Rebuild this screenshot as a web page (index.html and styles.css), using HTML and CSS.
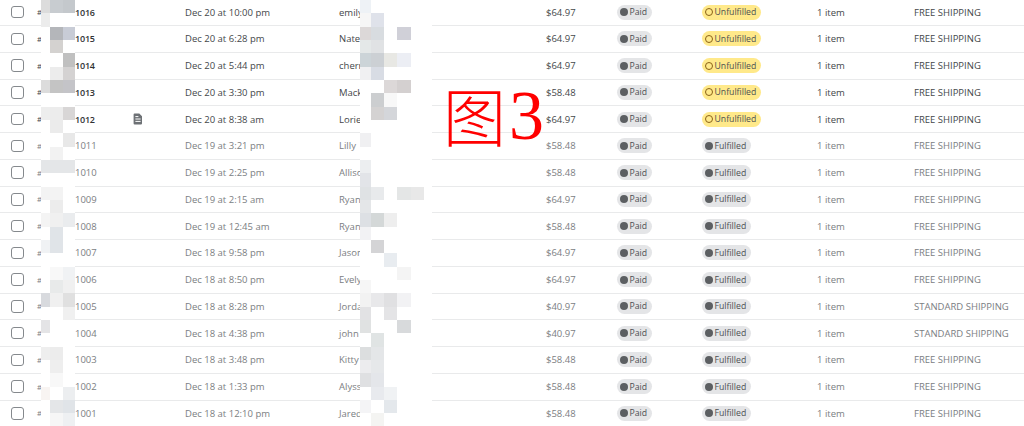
FILE: index.html
```html
<!DOCTYPE html>
<html lang="en">
<head>
<meta charset="utf-8">
<title>Orders</title>
<link rel="stylesheet" href="styles.css">
</head>
<body>
<main class="orders">
  <div class="row open"><span class="check"></span><span class="order"><i>#</i><b>1016</b></span><span></span><span>Dec 20 at 10:00 pm</span><span>emily</span><span>$64.97</span><span><em class="pill"><u class="dot"></u>Paid</em></span><span><em class="pill warn"><u class="ring"></u>Unfulfilled</em></span><span>1 item</span><span>FREE SHIPPING</span></div>
  <div class="row open"><span class="check"></span><span class="order"><i>#</i><b>1015</b></span><span></span><span>Dec 20 at 6:28 pm</span><span>Nate</span><span>$64.97</span><span><em class="pill"><u class="dot"></u>Paid</em></span><span><em class="pill warn"><u class="ring"></u>Unfulfilled</em></span><span>1 item</span><span>FREE SHIPPING</span></div>
  <div class="row open"><span class="check"></span><span class="order"><i>#</i><b>1014</b></span><span></span><span>Dec 20 at 5:44 pm</span><span>cherr</span><span>$64.97</span><span><em class="pill"><u class="dot"></u>Paid</em></span><span><em class="pill warn"><u class="ring"></u>Unfulfilled</em></span><span>1 item</span><span>FREE SHIPPING</span></div>
  <div class="row open"><span class="check"></span><span class="order"><i>#</i><b>1013</b></span><span></span><span>Dec 20 at 3:30 pm</span><span>Mack</span><span>$58.48</span><span><em class="pill"><u class="dot"></u>Paid</em></span><span><em class="pill warn"><u class="ring"></u>Unfulfilled</em></span><span>1 item</span><span>FREE SHIPPING</span></div>
  <div class="row open"><span class="check"></span><span class="order"><i>#</i><b>1012</b></span><span><svg class="note" viewBox="0 0 10 12"><path d="M1.6.5h4.7L9 3.2v7.2a1 1 0 0 1-1 1H1.6a1 1 0 0 1-1-1V1.5a1 1 0 0 1 1-1z" fill="#6d7175"/><path d="M2.4 3.6h3M2.4 6h5.2M2.4 8.4h5.2" stroke="#fff" stroke-width="1"/></svg></span><span>Dec 20 at 8:38 am</span><span>Lorie</span><span>$64.97</span><span><em class="pill"><u class="dot"></u>Paid</em></span><span><em class="pill warn"><u class="ring"></u>Unfulfilled</em></span><span>1 item</span><span>FREE SHIPPING</span></div>
  <div class="row"><span class="check"></span><span class="order"><i>#</i><b>1011</b></span><span></span><span>Dec 19 at 3:21 pm</span><span>Lilly</span><span>$58.48</span><span><em class="pill"><u class="dot"></u>Paid</em></span><span><em class="pill"><u class="dot"></u>Fulfilled</em></span><span>1 item</span><span>FREE SHIPPING</span></div>
  <div class="row"><span class="check"></span><span class="order"><i>#</i><b>1010</b></span><span></span><span>Dec 19 at 2:25 pm</span><span>Allison</span><span>$58.48</span><span><em class="pill"><u class="dot"></u>Paid</em></span><span><em class="pill"><u class="dot"></u>Fulfilled</em></span><span>1 item</span><span>FREE SHIPPING</span></div>
  <div class="row"><span class="check"></span><span class="order"><i>#</i><b>1009</b></span><span></span><span>Dec 19 at 2:15 am</span><span>Ryan</span><span>$64.97</span><span><em class="pill"><u class="dot"></u>Paid</em></span><span><em class="pill"><u class="dot"></u>Fulfilled</em></span><span>1 item</span><span>FREE SHIPPING</span></div>
  <div class="row"><span class="check"></span><span class="order"><i>#</i><b>1008</b></span><span></span><span>Dec 19 at 12:45 am</span><span>Ryan</span><span>$58.48</span><span><em class="pill"><u class="dot"></u>Paid</em></span><span><em class="pill"><u class="dot"></u>Fulfilled</em></span><span>1 item</span><span>FREE SHIPPING</span></div>
  <div class="row"><span class="check"></span><span class="order"><i>#</i><b>1007</b></span><span></span><span>Dec 18 at 9:58 pm</span><span>Jason</span><span>$64.97</span><span><em class="pill"><u class="dot"></u>Paid</em></span><span><em class="pill"><u class="dot"></u>Fulfilled</em></span><span>1 item</span><span>FREE SHIPPING</span></div>
  <div class="row"><span class="check"></span><span class="order"><i>#</i><b>1006</b></span><span></span><span>Dec 18 at 8:50 pm</span><span>Evelyn</span><span>$64.97</span><span><em class="pill"><u class="dot"></u>Paid</em></span><span><em class="pill"><u class="dot"></u>Fulfilled</em></span><span>1 item</span><span>FREE SHIPPING</span></div>
  <div class="row"><span class="check"></span><span class="order"><i>#</i><b>1005</b></span><span></span><span>Dec 18 at 8:28 pm</span><span>Jordan</span><span>$40.97</span><span><em class="pill"><u class="dot"></u>Paid</em></span><span><em class="pill"><u class="dot"></u>Fulfilled</em></span><span>1 item</span><span>STANDARD SHIPPING</span></div>
  <div class="row"><span class="check"></span><span class="order"><i>#</i><b>1004</b></span><span></span><span>Dec 18 at 4:38 pm</span><span>john</span><span>$40.97</span><span><em class="pill"><u class="dot"></u>Paid</em></span><span><em class="pill"><u class="dot"></u>Fulfilled</em></span><span>1 item</span><span>STANDARD SHIPPING</span></div>
  <div class="row"><span class="check"></span><span class="order"><i>#</i><b>1003</b></span><span></span><span>Dec 18 at 3:48 pm</span><span>Kitty</span><span>$58.48</span><span><em class="pill"><u class="dot"></u>Paid</em></span><span><em class="pill"><u class="dot"></u>Fulfilled</em></span><span>1 item</span><span>FREE SHIPPING</span></div>
  <div class="row"><span class="check"></span><span class="order"><i>#</i><b>1002</b></span><span></span><span>Dec 18 at 1:33 pm</span><span>Alyssa</span><span>$58.48</span><span><em class="pill"><u class="dot"></u>Paid</em></span><span><em class="pill"><u class="dot"></u>Fulfilled</em></span><span>1 item</span><span>FREE SHIPPING</span></div>
  <div class="row"><span class="check"></span><span class="order"><i>#</i><b>1001</b></span><span></span><span>Dec 18 at 12:10 pm</span><span>Jared</span><span>$58.48</span><span><em class="pill"><u class="dot"></u>Paid</em></span><span><em class="pill"><u class="dot"></u>Fulfilled</em></span><span>1 item</span><span>FREE SHIPPING</span></div>
</main>

<svg class="mosaic mosaic-a" viewBox="0 0 34.3 426" shape-rendering="crispEdges" aria-hidden="true">
  <rect width="34.3" height="426" fill="#fff"/>
  <rect x="0" y="0" width="8.7" height="13.33" fill="#dcdcdc"/><rect x="8.7" y="0" width="13.3" height="13.33" fill="#c8ccd0"/><rect x="22" y="0" width="12.3" height="13.33" fill="#c4c8cc"/>
  <rect x="0" y="13.33" width="8.7" height="13.33" fill="#ececec"/>
  <rect x="8.7" y="26.67" width="13.3" height="13.33" fill="#b4b6ba"/><rect x="22" y="26.67" width="12.3" height="13.33" fill="#c8ccd6"/>
  <rect x="8.7" y="40" width="13.3" height="13.33" fill="#d4d2d0"/>
  <rect x="22" y="53.33" width="12.3" height="13.33" fill="#c0c0c0"/>
  <rect x="8.7" y="66.67" width="13.3" height="13.33" fill="#ececec"/><rect x="22" y="66.67" width="12.3" height="13.33" fill="#d4d2d2"/>
  <rect x="0" y="80" width="8.7" height="13.33" fill="#dcdcdc"/><rect x="8.7" y="80" width="13.3" height="13.33" fill="#c4c4c4"/><rect x="22" y="80" width="12.3" height="13.33" fill="#c4c4c8"/>
  <rect x="0" y="106.67" width="8.7" height="13.33" fill="#ededed"/><rect x="8.7" y="106.67" width="13.3" height="13.33" fill="#ececec"/><rect x="22" y="106.67" width="12.3" height="13.33" fill="#d8d6d6"/>
  <rect x="8.7" y="120" width="13.3" height="13.33" fill="#ebebeb"/>
  <rect x="22" y="133.33" width="12.3" height="13.33" fill="#e8e8e8"/>
  <rect x="8.7" y="146.67" width="13.3" height="13.33" fill="#f2f2f2"/>
  <rect x="0" y="160" width="34.3" height="13.33" fill="#e4e6e8"/>
  <rect x="0" y="186.67" width="22" height="13.33" fill="#f3f3f3"/>
  <rect x="8.7" y="200" width="13.3" height="13.33" fill="#ececec"/>
  <rect x="0" y="213.33" width="8.7" height="13.33" fill="#f4f4f4"/><rect x="8.7" y="213.33" width="13.3" height="13.33" fill="#f0f0f0"/><rect x="22" y="213.33" width="12.3" height="13.33" fill="#eaecee"/>
  <rect x="8.7" y="226.67" width="13.3" height="13.33" fill="#e0e4e8"/>
  <rect x="0" y="240" width="8.7" height="13.33" fill="#f0f2f4"/><rect x="8.7" y="240" width="13.3" height="13.33" fill="#e0e4e8"/>
  <rect x="8.7" y="266.67" width="13.3" height="13.33" fill="#f8f8f8"/><rect x="22" y="266.67" width="12.3" height="13.33" fill="#f0f2f4"/>
  <rect x="8.7" y="280" width="13.3" height="13.33" fill="#e8eaea"/><rect x="22" y="280" width="12.3" height="13.33" fill="#f0f0f0"/>
  <rect x="0" y="293.33" width="8.7" height="13.33" fill="#d8dade"/><rect x="8.7" y="293.33" width="13.3" height="13.33" fill="#f0f0f0"/><rect x="22" y="293.33" width="12.3" height="13.33" fill="#e0e0e0"/>
  <rect x="22" y="306.67" width="12.3" height="13.33" fill="#f0f0f0"/>
  <rect x="0" y="320" width="8.7" height="13.33" fill="#e4e4e6"/>
  <rect x="0" y="346.67" width="8.7" height="13.33" fill="#eeeeee"/><rect x="8.7" y="346.67" width="13.3" height="13.33" fill="#ececec"/>
  <rect x="8.7" y="360" width="13.3" height="13.33" fill="#eeeeee"/>
  <rect x="8.7" y="373.33" width="13.3" height="13.33" fill="#f8f8f8"/>
  <rect x="0" y="386.67" width="8.7" height="13.33" fill="#f8f4f2"/><rect x="22" y="386.67" width="12.3" height="13.33" fill="#eceef0"/>
  <rect x="8.7" y="400" width="13.3" height="13.33" fill="#e4e6e8"/><rect x="22" y="400" width="12.3" height="13.33" fill="#e0e4e8"/>
  <rect x="8.7" y="413.33" width="13.3" height="13.33" fill="#f6f6f6"/><rect x="22" y="413.33" width="12.3" height="13.33" fill="#eef0f2"/>
</svg>

<svg class="mosaic mosaic-b" viewBox="0 0 72 426" shape-rendering="crispEdges" aria-hidden="true">
  <rect width="72" height="426" fill="#fff"/>
  <rect x="0" y="0" width="10.7" height="13.33" fill="#eef2f6"/>
  <rect x="0" y="13.33" width="10.7" height="13.33" fill="#f6f6f6"/><rect x="10.7" y="13.33" width="13.3" height="13.33" fill="#dfe2ea"/>
  <rect x="0" y="26.67" width="10.7" height="13.33" fill="#dcd8d8"/><rect x="10.7" y="26.67" width="13.3" height="13.33" fill="#d8dce0"/><rect x="37.3" y="26.67" width="13.4" height="13.33" fill="#d0d0d8"/>
  <rect x="0" y="40" width="10.7" height="13.33" fill="#e4e8e8"/><rect x="10.7" y="40" width="13.3" height="13.33" fill="#e0e2e4"/>
  <rect x="0" y="53.33" width="10.7" height="13.33" fill="#ccd4d8"/><rect x="10.7" y="53.33" width="13.3" height="13.33" fill="#ccd0d4"/><rect x="24" y="53.33" width="13.3" height="13.33" fill="#e8e8e4"/><rect x="37.3" y="53.33" width="13.4" height="13.33" fill="#eceef4"/>
  <rect x="0" y="66.67" width="10.7" height="13.33" fill="#f0f0f2"/><rect x="10.7" y="66.67" width="13.3" height="13.33" fill="#d8dce4"/>
  <rect x="24" y="80" width="13.3" height="13.33" fill="#dcd8d8"/><rect x="37.3" y="80" width="13.4" height="13.33" fill="#d4d0d0"/>
  <rect x="10.7" y="93.33" width="13.3" height="13.33" fill="#ccced0"/><rect x="24" y="93.33" width="13.3" height="13.33" fill="#f8f8f8"/>
  <rect x="10.7" y="106.67" width="13.3" height="13.33" fill="#d4d2d2"/><rect x="24" y="106.67" width="13.3" height="13.33" fill="#d4d6da"/>
  <rect x="0" y="133.33" width="10.7" height="13.33" fill="#f0f0f2"/>
  <rect x="0" y="160" width="10.7" height="13.33" fill="#eceef0"/>
  <rect x="0" y="173.33" width="10.7" height="13.33" fill="#e2e4e8"/>
  <rect x="0" y="186.67" width="10.7" height="13.33" fill="#dfe2e4"/><rect x="10.7" y="186.67" width="13.3" height="13.33" fill="#e8eaec"/><rect x="37.3" y="186.67" width="13.4" height="13.33" fill="#e4e6e6"/><rect x="50.7" y="186.67" width="13.3" height="13.33" fill="#e8e8e8"/>
  <rect x="0" y="200" width="10.7" height="13.33" fill="#e4e6e8"/>
  <rect x="0" y="213.33" width="10.7" height="13.33" fill="#dde0e4"/><rect x="10.7" y="213.33" width="13.3" height="13.33" fill="#d4d8d8"/><rect x="24" y="213.33" width="13.3" height="13.33" fill="#eeeeee"/>
  <rect x="0" y="226.67" width="10.7" height="13.33" fill="#f2f2f4"/>
  <rect x="10.7" y="240" width="13.3" height="13.33" fill="#d4d4d6"/>
  <rect x="24" y="253.33" width="13.3" height="13.33" fill="#e8ecf0"/>
  <rect x="37.3" y="266.67" width="13.4" height="13.33" fill="#f4f4f4"/>
  <rect x="0" y="280" width="10.7" height="13.33" fill="#f6f6f6"/>
  <rect x="0" y="293.33" width="10.7" height="13.33" fill="#f2f2f2"/><rect x="10.7" y="293.33" width="13.3" height="13.33" fill="#e8e8ea"/><rect x="24" y="293.33" width="13.3" height="13.33" fill="#e0e0e2"/><rect x="37.3" y="293.33" width="13.4" height="13.33" fill="#f2f2f4"/>
  <rect x="0" y="306.67" width="10.7" height="13.33" fill="#e2e2e4"/><rect x="24" y="306.67" width="13.3" height="13.33" fill="#e4e4e6"/>
  <rect x="0" y="320" width="10.7" height="13.33" fill="#e0e2e2"/><rect x="37.3" y="320" width="13.4" height="13.33" fill="#d8dadc"/>
  <rect x="10.7" y="333.33" width="13.3" height="13.33" fill="#e0e4e4"/>
  <rect x="0" y="346.67" width="10.7" height="13.33" fill="#dcdedf"/><rect x="10.7" y="346.67" width="13.3" height="13.33" fill="#e4e6e8"/>
  <rect x="0" y="360" width="10.7" height="13.33" fill="#ececee"/><rect x="10.7" y="360" width="13.3" height="13.33" fill="#e6e8ea"/>
  <rect x="0" y="373.33" width="10.7" height="13.33" fill="#dfe0e2"/><rect x="10.7" y="373.33" width="13.3" height="13.33" fill="#e4e6ea"/>
  <rect x="10.7" y="386.67" width="13.3" height="13.33" fill="#e8eaee"/><rect x="24" y="386.67" width="13.3" height="13.33" fill="#f0f2f4"/>
  <rect x="0" y="400" width="10.7" height="13.33" fill="#f4f4f6"/><rect x="24" y="400" width="13.3" height="13.33" fill="#e4e8ec"/>
  <rect x="10.7" y="413.33" width="13.3" height="13.33" fill="#f4f4f2"/>
</svg>

<div class="stamp"><span class="stamp-cjk">图</span><span class="stamp-num">3</span></div>
</body>
</html>
```

FILE: styles.css
```css
* { box-sizing: border-box; }

html, body {
  margin: 0;
  height: 426px;
  overflow: hidden;
  background: #fff;
}

body {
  position: relative;
  font-family: "Open Sans", "Noto Sans", sans-serif;
  font-size: 9.5px;
  color: #44474a;
}

.orders {
  margin-top: -0.7px;
}

.row {
  display: grid;
  grid-template-columns: 26px 96px 52px 154px 207px 71px 85px 115px 97px 1fr;
  align-items: center;
  height: 26.75px;
  padding-left: 11px;
  border-bottom: 1px solid #e9eaeb;
  color: #7b7e82;
  white-space: nowrap;
}

.row.open {
  color: #44474a;
}

.check {
  display: block;
  width: 12.5px;
  height: 12.5px;
  border: 1.3px solid #85898d;
  border-radius: 3px;
}

.order {
  display: flex;
  align-items: center;
}

.order i {
  width: 38px;
  font-size: 7.5px;
  font-style: normal;
}

.order b {
  font-weight: 400;
}

.open .order b {
  font-size: 9px;
  font-weight: 600;
  letter-spacing: -0.2px;
  color: #303234;
}

.note {
  display: block;
  width: 10px;
  height: 12px;
}

.pill {
  display: inline-flex;
  align-items: center;
  gap: 2px;
  height: 15px;
  padding: 0 4.5px 0 2.5px;
  border-radius: 8px;
  background: #e4e5e7;
  color: #4c4f52;
  font-size: 8.7px;
  font-style: normal;
}

.pill.warn {
  background: #ffe98a;
}

.dot,
.ring {
  display: block;
  width: 8px;
  height: 8px;
  border-radius: 50%;
  text-decoration: none;
}

.dot {
  background: #5c5f62;
}

.ring {
  border: 1.5px solid #8a6116;
}

.mosaic {
  position: absolute;
  top: 0;
  height: 426px;
}

.mosaic-a {
  left: 41px;
  width: 34.3px;
}

.mosaic-b {
  left: 360px;
  width: 72px;
}

.stamp {
  position: absolute;
  left: 443px;
  top: 68px;
  display: flex;
  align-items: center;
  color: #f00;
  line-height: 88px;
}

.stamp-cjk {
  font-family: "Noto Sans CJK SC", sans-serif;
  font-size: 63px;
  font-weight: 300;
}

.stamp-num {
  margin-top: 4px;
  margin-left: 3px;
  font-family: "Liberation Serif", serif;
  font-size: 70px;
}
```
